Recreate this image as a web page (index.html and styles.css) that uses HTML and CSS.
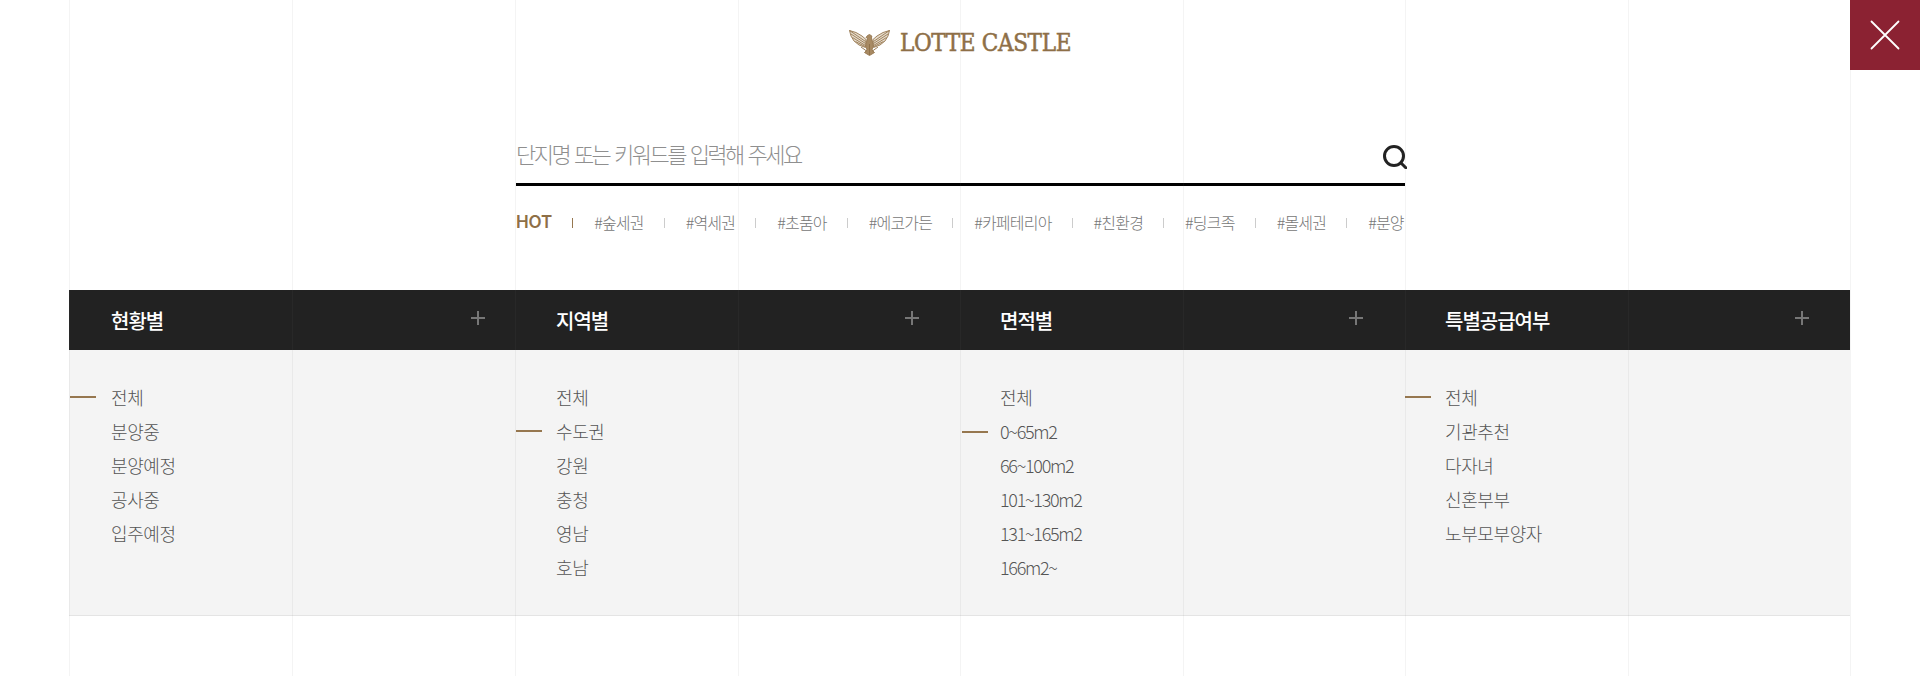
FILE: index.html
```html
<!DOCTYPE html>
<html lang="ko">
<head>
<meta charset="utf-8">
<title>LOTTE CASTLE</title>
<link rel="stylesheet" href="styles.css">
</head>
<body>
<div class="page">
  <div class="guides"><i></i><i></i><i></i><i></i><i></i><i></i><i></i><i></i></div>
  <a class="close" href="#" aria-label="닫기">
    <svg width="30" height="30" viewBox="0 0 30 30"><path d="M1.500 1.500L28.500 28.500M28.500 1.500L1.500 28.500" stroke="#fff" stroke-width="1.800" stroke-linecap="round" fill="none"/></svg>
  </a>
  <header class="brand">
    <svg class="eagle" width="41" height="26" viewBox="0 0 41 26" fill="none" stroke="#96774f" stroke-width=".9">
      <path d="M0.500 0.500L7 2.500L13 6L17 9.500L16.500 17.500L10 15L5 11L2 6Z" fill="#e6dccd"/>
      <path d="M40.500 0.500L34 2.500L28 6L24 9.500L24.500 17.500L31 15L36 11L39 6Z" fill="#e6dccd"/>
      <path d="M0.500 0.500L16.500 11.500M2 4L16.500 13.500M3.500 7.500L16.500 15.500M6.500 11.500L16 16.500M40.500 0.500L24.500 11.500M39 4L24.500 13.500M37.500 7.500L24.500 15.500M34.500 11.500L25 16.500"/>
      <path d="M20.500 4.500L18.500 5.500L17 7.500L18.500 7.800L17.500 12L17 16.500L18 20L15.500 22.500L20.500 25.500L25.500 22.500L23 20L24 16.500L23.500 12L22.500 8L22.800 6Z" fill="#a88a63"/>
      <path d="M12 17L17.500 21M29 17L23.500 21M20.500 14V25" stroke="#8e6f47"/>
    </svg>
    <span class="wordmark">LOTTE CASTLE</span>
  </header>
  <section class="search">
    <form class="search-bar">
      <input class="search-input" type="text" placeholder="단지명 또는 키워드를 입력해 주세요">
      <button class="search-btn" type="button" aria-label="검색">
        <svg width="24" height="24" viewBox="0 0 24 24" fill="none" stroke="#222" stroke-width="3"><circle cx="11" cy="11" r="9.500"/><path d="M17.800 17.800L22.800 22.800" stroke-linecap="round"/></svg>
      </button>
    </form>
    <div class="tags">
      <span class="hot">HOT</span>
      <a class="tag" href="#">#숲세권</a>
      <a class="tag" href="#">#역세권</a>
      <a class="tag" href="#">#초품아</a>
      <a class="tag" href="#">#에코가든</a>
      <a class="tag" href="#">#카페테리아</a>
      <a class="tag" href="#">#친환경</a>
      <a class="tag" href="#">#딩크족</a>
      <a class="tag" href="#">#몰세권</a>
      <a class="tag tag-last" href="#">#분양</a>
    </div>
  </section>
  <section class="filters">
    <div class="col col-1">
      <h3 class="col-head"><span>현황별</span><b class="plus"></b></h3>
      <ul class="opts">
        <li class="on">전체</li><li>분양중</li><li>분양예정</li><li>공사중</li><li>입주예정</li>
      </ul>
    </div>
    <div class="col col-2">
      <h3 class="col-head"><span>지역별</span><b class="plus"></b></h3>
      <ul class="opts">
        <li>전체</li><li class="on">수도권</li><li>강원</li><li>충청</li><li>영남</li><li>호남</li>
      </ul>
    </div>
    <div class="col col-3">
      <h3 class="col-head"><span>면적별</span><b class="plus"></b></h3>
      <ul class="opts">
        <li>전체</li><li class="on num">0~65m2</li><li class="num">66~100m2</li><li class="num">101~130m2</li><li class="num">131~165m2</li><li class="num">166m2~</li>
      </ul>
    </div>
    <div class="col col-4">
      <h3 class="col-head"><span>특별공급여부</span><b class="plus"></b></h3>
      <ul class="opts">
        <li class="on">전체</li><li>기관추천</li><li>다자녀</li><li>신혼부부</li><li>노부모부양자</li>
      </ul>
    </div>
  </section>
</div>
</body>
</html>
```
FILE: styles.css
```css
* { box-sizing: border-box; }
html, body { margin: 0; padding: 0; background: #fff; }
body { font-family: "Noto Sans CJK KR", "Noto Sans", sans-serif; overflow: hidden; }
a { color: inherit; text-decoration: none; }
ul { list-style: none; margin: 0; padding: 0; }
h3 { margin: 0; }

.page { position: relative; width: 1920px; height: 676px; overflow: hidden; }

.guides { position: absolute; top: 0; bottom: 0; left: 69px; width: 1782px; display: grid; grid-template-columns: 223px 223px 223px 222px 223px 222px 223px 223px; z-index: 2; pointer-events: none; }
.guides i { border-left: 1px solid rgba(110, 110, 110, .08); }
.guides i:last-child { border-right: 1px solid rgba(110, 110, 110, .08); }

.close { position: absolute; top: 0; right: 0; width: 70px; height: 70px; background: #8b2232; display: flex; align-items: center; justify-content: center; z-index: 3; }

.brand { height: 85px; padding-top: 30px; display: flex; justify-content: center; align-items: flex-start; gap: 10px; }
.eagle { display: block; }
.wordmark { font-family: "DejaVu Serif Condensed", "DejaVu Serif", serif; font-size: 24px; line-height: 26px; letter-spacing: -.35px; color: #8e6f47; -webkit-text-stroke: .5px #8e6f47; }

.search { width: 889px; margin-left: 516px; }
.search-bar { height: 101px; padding-top: 44px; border-bottom: 3px solid #000; display: flex; align-items: flex-start; justify-content: space-between; }
.search-input { flex: 1; height: 48px; border: 0; outline: 0; padding: 0; background: transparent; font-family: "Noto Sans CJK KR", sans-serif; font-size: 22px; font-weight: 300; letter-spacing: -2.55px; word-spacing: 1.2px; color: #222; }
.search-input::placeholder { color: #8f8f8f; opacity: 1; }
.search-btn { border: 0; background: none; padding: 0; margin: 16px -2px 0 0; width: 24px; height: 24px; }
.search-btn svg { display: block; }

.tags { height: 104px; padding-top: 24px; display: flex; align-items: flex-start; white-space: nowrap; font-size: 16px; line-height: 24px; }
.hot { font-family: "Inter", sans-serif; font-size: 17px; font-weight: 600; color: #8e6f47; letter-spacing: -.1px; padding-right: 20px; }
.tag { position: relative; padding: 0 20px 0 22px; color: #777; font-weight: 300; letter-spacing: -.8px; flex: none; }
.tag-last { padding-right: 0; }
.tag::before { content: ""; position: absolute; left: 0; top: 8px; width: 1px; height: 10px; background: #ccc; }
.hot + .tag::before { background: #96774f; }

.filters { margin-left: 69px; width: 1781px; display: grid; grid-template-columns: 446px 445px 445px 445px; background: #f4f4f4; border-bottom: 1px solid #e4e4e4; height: 326px; }
.col-head { height: 60px; background: #222; color: #fff; padding: 0 41px; display: flex; align-items: center; justify-content: space-between; font-size: 20px; font-weight: 500; letter-spacing: -1px; }
.col-1 .col-head { padding: 0 30px 0 42px; }
.col-3 .col-head { padding: 0 42px 0 40px; }
.col-4 .col-head { padding-left: 40px; }
.plus { position: relative; display: block; width: 14px; height: 14px; top: -2px; }
.plus::before, .plus::after { content: ""; position: absolute; background: #777; }
.plus::before { left: 0; right: 0; top: 6px; height: 2px; }
.plus::after { top: 0; bottom: 0; left: 6px; width: 2px; }

.opts { padding: 30px 0 0 41px; }
.col-1 .opts { padding-left: 42px; }
.col-3 .opts, .col-4 .opts { padding-left: 40px; }
.opts li { position: relative; height: 34px; line-height: 34px; font-size: 18px; font-weight: 300; letter-spacing: -.4px; color: #555; }
.opts li.num { letter-spacing: -1.3px; }
.opts li.on::before { content: ""; position: absolute; left: -41px; top: 16px; width: 26px; height: 2px; background: #96774f; }
.col-2 .opts li.on::before { left: -40px; }
.col-3 .opts li.on::before { left: -38px; top: 17px; }
.col-4 .opts li.on::before { left: -40px; }
```
